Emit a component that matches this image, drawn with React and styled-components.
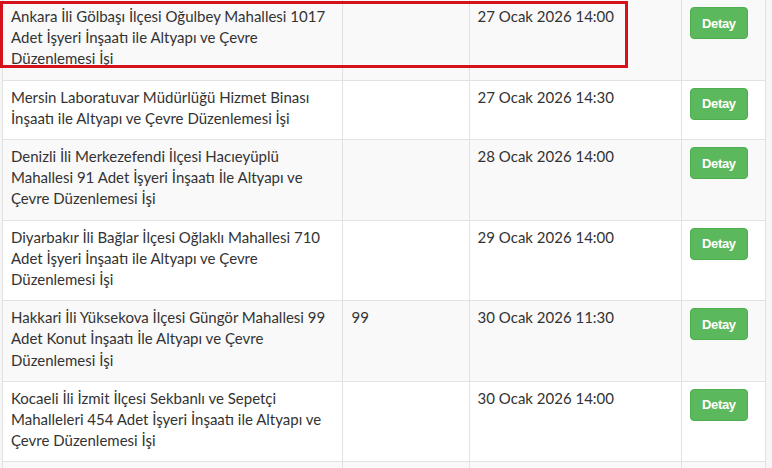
import React from "react";
import styled, { createGlobalStyle } from "styled-components";

const Global = createGlobalStyle`
  html, body { margin: 0; padding: 0; background: #f6f6f6; }
  body { font-family: Lato, "Open Sans", "Liberation Sans", sans-serif; color: #333; }
`;

const Page = styled.div`
  position: relative;
  width: 772px;
  height: 468px;
  overflow: hidden;
  padding-left: 2px;
  box-sizing: border-box;
`;

const Table = styled.table`
  width: 764px;
  border-collapse: collapse;
  table-layout: fixed;
  background: #fff;
  border-left: 1px solid #e2e2e2;
  border-right: 1px solid #e2e2e2;
`;

const Row = styled.tr`
  background: ${(p) => (p.$striped ? "#f9f9f9" : "#fff")};
`;

const Cell = styled.td`
  padding: 6px 8px 10px;
  vertical-align: top;
  font-size: 15px;
  line-height: 21.2px;
  color: #333;
  border-bottom: 1px solid #e2e2e2;
  border-right: 1px solid #e2e2e2;
  overflow: hidden;
`;

const ActionCell = styled(Cell)`
  padding: 8px 8px;
`;

const Button = styled.button`
  display: block;
  width: 58px;
  height: 32px;
  border: 1px solid #4cae4c;
  border-radius: 4px;
  background: #5cb85c;
  color: #fff;
  font-family: "Liberation Sans", Arial, sans-serif;
  font-weight: 700;
  font-size: 13px;
  letter-spacing: -0.3px;
  padding: 0;
  margin-top: -1px;
`;

const Highlight = styled.div`
  position: absolute;
  left: 0;
  top: 1px;
  width: 628px;
  height: 67px;
  border: 3px solid #d3121b;
  box-sizing: border-box;
  pointer-events: none;
`;

const rows = [
  { t: "Ankara İli Gölbaşı İlçesi Oğulbey Mahallesi 1017 Adet İşyeri İnşaatı ile Altyapı ve Çevre Düzenlemesi İşi", n: "", d: "27 Ocak 2026 14:00" },
  { t: "Mersin Laboratuvar Müdürlüğü Hizmet Binası İnşaatı ile Altyapı ve Çevre Düzenlemesi İşi", n: "", d: "27 Ocak 2026 14:30" },
  { t: "Denizli İli Merkezefendi İlçesi Hacıeyüplü Mahallesi 91 Adet İşyeri İnşaatı İle Altyapı ve Çevre Düzenlemesi İşi", n: "", d: "28 Ocak 2026 14:00" },
  { t: "Diyarbakır İli Bağlar İlçesi Oğlaklı Mahallesi 710 Adet İşyeri İnşaatı ile Altyapı ve Çevre Düzenlemesi İşi", n: "", d: "29 Ocak 2026 14:00" },
  { t: "Hakkari İli Yüksekova İlçesi Güngör Mahallesi 99 Adet Konut İnşaatı İle Altyapı ve Çevre Düzenlemesi İşi", n: "99", d: "30 Ocak 2026 11:30" },
  { t: "Kocaeli İli İzmit İlçesi Sekbanlı ve Sepetçi Mahalleleri 454 Adet İşyeri İnşaatı ile Altyapı ve Çevre Düzenlemesi İşi", n: "", d: "30 Ocak 2026 14:00" },
];

export default function App() {
  return (
    <Page>
      <Global />
      <Table>
        <colgroup>
          <col style={{ width: 340 }} />
          <col style={{ width: 126 }} />
          <col style={{ width: 212 }} />
          <col style={{ width: 84 }} />
        </colgroup>
        <tbody>
          {rows.map((r, i) => (
            <Row key={i} $striped={i % 2 === 0}>
              <Cell>{r.t}</Cell>
              <Cell>{r.n}</Cell>
              <Cell>{r.d}</Cell>
              <ActionCell>
                <Button>Detay</Button>
              </ActionCell>
            </Row>
          ))}
          <Row $striped>
            <Cell>&nbsp;</Cell>
            <Cell />
            <Cell />
            <ActionCell />
          </Row>
        </tbody>
      </Table>
      <Highlight />
    </Page>
  );
}
